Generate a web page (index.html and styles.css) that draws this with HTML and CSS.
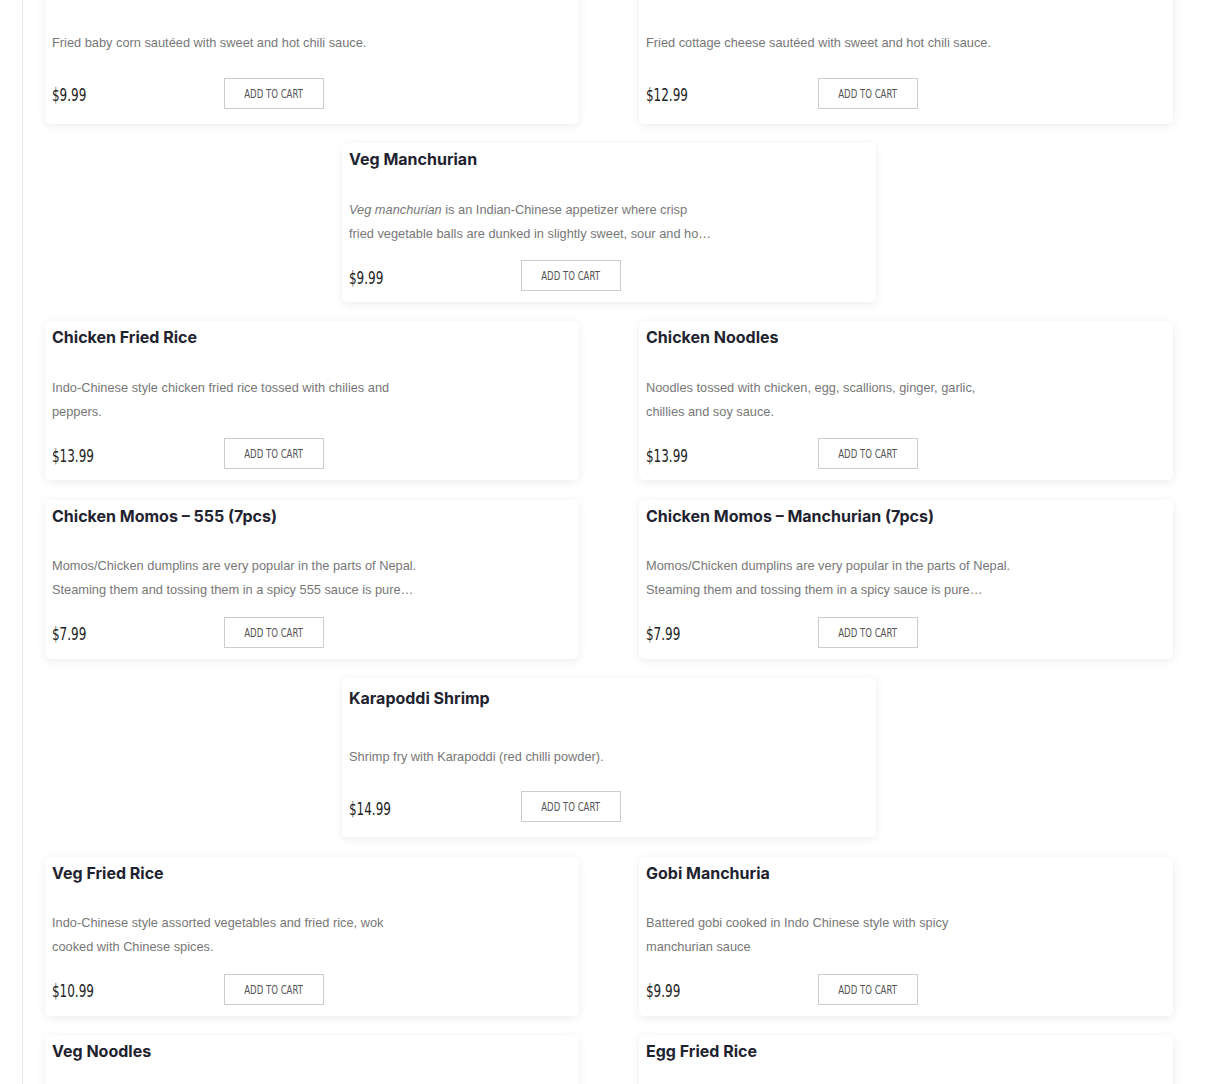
FILE: index.html
```html
<!DOCTYPE html>
<html lang="en">
<head>
<meta charset="utf-8">
<title>Menu</title>
<link rel="stylesheet" href="styles.css">
</head>
<body>
<div class="menu">
  <div class="row">
    <div class="card">
      <h3 class="title">Chilli Baby Corn</h3>
      <div class="desc"><p>Fried baby corn sautéed with sweet and hot chili sauce.</p></div>
      <div class="buy"><span class="price"><span>$9.99</span></span><button class="btn"><span>Add to cart</span></button></div>
    </div>
    <div class="card">
      <h3 class="title">Chilli Paneer</h3>
      <div class="desc"><p>Fried cottage cheese sautéed with sweet and hot chili sauce.</p></div>
      <div class="buy"><span class="price"><span>$12.99</span></span><button class="btn"><span>Add to cart</span></button></div>
    </div>
  </div>
  <div class="row">
    <div class="card">
      <h3 class="title">Veg Manchurian</h3>
      <div class="desc"><p><em>Veg manchurian</em> is an Indian-Chinese appetizer where crisp fried vegetable balls are dunked in slightly sweet, sour and ho…</p></div>
      <div class="buy"><span class="price"><span>$9.99</span></span><button class="btn"><span>Add to cart</span></button></div>
    </div>
  </div>
  <div class="row">
    <div class="card">
      <h3 class="title">Chicken Fried Rice</h3>
      <div class="desc"><p>Indo-Chinese style chicken fried rice tossed with chilies and peppers.</p></div>
      <div class="buy"><span class="price"><span>$13.99</span></span><button class="btn"><span>Add to cart</span></button></div>
    </div>
    <div class="card">
      <h3 class="title">Chicken Noodles</h3>
      <div class="desc"><p>Noodles tossed with chicken, egg, scallions, ginger, garlic, chillies and soy sauce.</p></div>
      <div class="buy"><span class="price"><span>$13.99</span></span><button class="btn"><span>Add to cart</span></button></div>
    </div>
  </div>
  <div class="row">
    <div class="card">
      <h3 class="title">Chicken Momos – 555 (7pcs)</h3>
      <div class="desc"><p>Momos/Chicken dumplins are very popular in the parts of Nepal. Steaming them and tossing them in a spicy 555 sauce is pure…</p></div>
      <div class="buy"><span class="price"><span>$7.99</span></span><button class="btn"><span>Add to cart</span></button></div>
    </div>
    <div class="card">
      <h3 class="title">Chicken Momos – Manchurian (7pcs)</h3>
      <div class="desc"><p>Momos/Chicken dumplins are very popular in the parts of Nepal. Steaming them and tossing them in a spicy sauce is pure…</p></div>
      <div class="buy"><span class="price"><span>$7.99</span></span><button class="btn"><span>Add to cart</span></button></div>
    </div>
  </div>
  <div class="row">
    <div class="card">
      <h3 class="title">Karapoddi Shrimp</h3>
      <div class="desc"><p>Shrimp fry with Karapoddi (red chilli powder).</p></div>
      <div class="buy"><span class="price"><span>$14.99</span></span><button class="btn"><span>Add to cart</span></button></div>
    </div>
  </div>
  <div class="row">
    <div class="card">
      <h3 class="title">Veg Fried Rice</h3>
      <div class="desc"><p>Indo-Chinese style assorted vegetables and fried rice, wok cooked with Chinese spices.</p></div>
      <div class="buy"><span class="price"><span>$10.99</span></span><button class="btn"><span>Add to cart</span></button></div>
    </div>
    <div class="card">
      <h3 class="title">Gobi Manchuria</h3>
      <div class="desc"><p>Battered gobi cooked in Indo Chinese style with spicy manchurian sauce</p></div>
      <div class="buy"><span class="price"><span>$9.99</span></span><button class="btn"><span>Add to cart</span></button></div>
    </div>
  </div>
  <div class="row">
    <div class="card">
      <h3 class="title">Veg Noodles</h3>
      <div class="desc"><p>Noodles tossed with assorted vegetables, scallions, ginger, garlic and soy sauce.</p></div>
      <div class="buy"><span class="price"><span>$10.99</span></span><button class="btn"><span>Add to cart</span></button></div>
    </div>
    <div class="card">
      <h3 class="title">Egg Fried Rice</h3>
      <div class="desc"><p>Indo-Chinese style egg fried rice wok tossed with scallions and soy sauce.</p></div>
      <div class="buy"><span class="price"><span>$10.99</span></span><button class="btn"><span>Add to cart</span></button></div>
    </div>
  </div>
</div>
</body>
</html>
```

FILE: styles.css
```css
html, body {
  margin: 0;
  padding: 0;
  background: #fff;
}

body {
  font-family: "Liberation Sans", Arial, sans-serif;
}

.menu {
  width: 1128px;
  margin: -35.4px 0 0 22px;
  padding-left: 22px;
  border-left: 1px solid #e6e6e6;
  display: flex;
  flex-direction: column;
  gap: 19.4px;
  padding-bottom: 40px;
}

.row {
  display: flex;
  justify-content: center;
  gap: 60px;
}

.card {
  width: 534px;
  height: 159px;
  box-sizing: border-box;
  padding: 0 7px 7px;
  background: #fff;
  border-radius: 5px;
  box-shadow: 0 2px 10px rgba(0, 0, 0, 0.08);
  display: flex;
  flex-direction: column;
  justify-content: center;
}

.title {
  margin: 0;
  font-family: "Inter", "Noto Sans", sans-serif;
  font-weight: 700;
  font-size: 16px;
  line-height: 24px;
  color: #1f2330;
}

.desc {
  margin-top: 26.5px;
  min-height: 40px;
  display: flex;
  align-items: center;
}

.desc p {
  margin: 0;
  width: 366px;
  font-family: "Liberation Sans", Arial, sans-serif;
  font-size: 12.8px;
  line-height: 24px;
  color: #777;
}

.buy {
  margin-top: 14.5px;
  height: 31px;
  display: flex;
  align-items: center;
}

.price {
  width: 172px;
  flex: none;
  padding-top: 3px;
  font-family: "DejaVu Sans Condensed", "DejaVu Sans", sans-serif;
  font-size: 18px;
  color: #222;
}

.price span {
  display: inline-block;
  transform: scaleX(0.74);
  transform-origin: left center;
}

.btn {
  width: 100px;
  height: 31px;
  flex: none;
  box-sizing: border-box;
  border: 1px solid #ccc;
  border-radius: 0;
  background: #fff;
  padding: 0;
  font-family: "DejaVu Sans Condensed", "DejaVu Sans", sans-serif;
  font-size: 12.5px;
  text-transform: uppercase;
  color: #555;
  display: flex;
  align-items: center;
  justify-content: center;
  overflow: hidden;
}

.btn span {
  display: inline-block;
  transform: scaleX(0.76);
  white-space: nowrap;
}
```
